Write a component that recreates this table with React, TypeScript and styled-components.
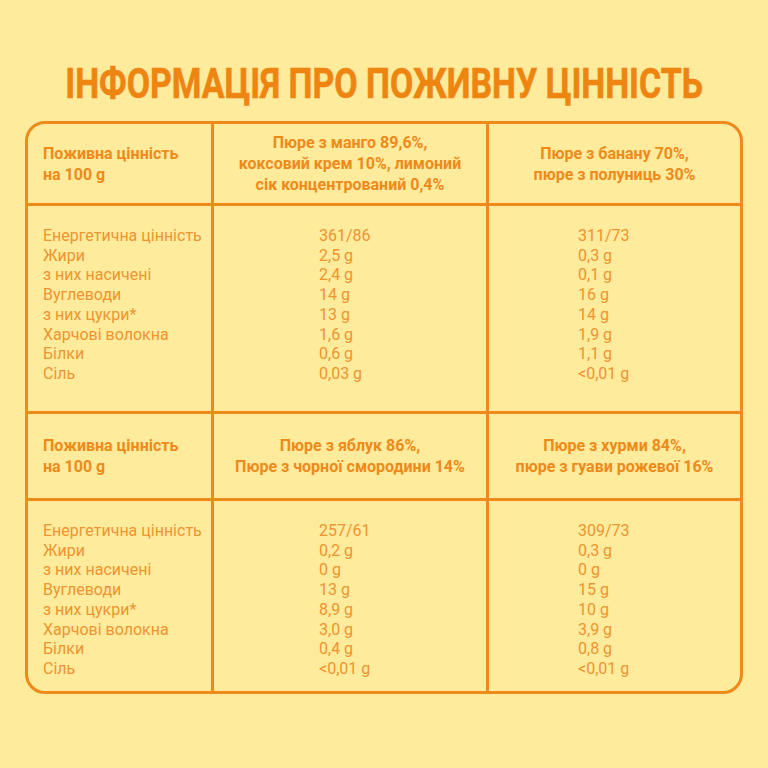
import React from "react";
import styled, { createGlobalStyle } from "styled-components";

const Global = createGlobalStyle`
  html, body { margin: 0; padding: 0; background: #FEEB9C; }
  body { font-family: Roboto, "Noto Sans", sans-serif; }
`;

const Page = styled.div`
  width: 768px;
  height: 768px;
  background: #FEEB9C;
  box-sizing: border-box;
  padding-top: 62px;
  display: flex;
  flex-direction: column;
  align-items: center;
`;

const Title = styled.h1`
  margin: 0;
  font-family: Roboto, sans-serif;
  font-weight: 700;
  font-size: 43px;
  line-height: 43px;
  color: #EE8511;
  white-space: nowrap;
  transform: scaleX(0.787);
  -webkit-text-stroke: 0.6px #EE8511;
`;

const Table = styled.div`
  margin-top: 16px;
  width: 718px;
  box-sizing: border-box;
  border: 3px solid #EE8A1A;
  border-radius: 20px;
  overflow: hidden;
  display: grid;
  grid-template-columns: 186px 275px 1fr;
  grid-template-rows: 82px 208px 87px 190px;
`;

const Cell = styled.div<{ $last?: boolean; $bottom?: boolean; $head?: boolean; $center?: boolean; $pad?: number }>`
  box-sizing: border-box;
  border-right: ${(p) => (p.$last ? "none" : "3px solid #EE8A1A")};
  border-bottom: ${(p) => (p.$bottom ? "none" : "3px solid #EE8A1A")};
  display: flex;
  flex-direction: column;
  justify-content: ${(p) => (p.$head ? "center" : "flex-start")};
  align-items: ${(p) => (p.$center ? "center" : "flex-start")};
  text-align: ${(p) => (p.$center ? "center" : "left")};
  padding-left: ${(p) => (p.$center ? 0 : p.$pad ?? 15)}px;
  padding-top: ${(p) => (p.$head ? 0 : 20)}px;
`;

const HeadText = styled.div`
  font-weight: 700;
  font-size: 16px;
  line-height: 21px;
  color: #EE8A1A;
`;

const Lines = styled.div`
  font-weight: 400;
  font-size: 16px;
  line-height: 19.7px;
  color: #EE9430;
`;

const labels = [
  "Енергетична цінність",
  "Жири",
  "з них насичені",
  "Вуглеводи",
  "з них цукри*",
  "Харчові волокна",
  "Білки",
  "Сіль",
];

type Section = {
  heads: [string[], string[]];
  values: [string[], string[]];
};

const sections: Section[] = [
  {
    heads: [
      ["Пюре з манго 89,6%,", "коксовий крем 10%, лимоний", "сік концентрований 0,4%"],
      ["Пюре з банану 70%,", "пюре з полуниць 30%"],
    ],
    values: [
      ["361/86", "2,5 g", "2,4 g", "14 g", "13 g", "1,6 g", "0,6 g", "0,03 g"],
      ["311/73", "0,3 g", "0,1 g", "16 g", "14 g", "1,9 g", "1,1 g", "<0,01 g"],
    ],
  },
  {
    heads: [
      ["Пюре з яблук 86%,", "Пюре з чорної смородини 14%"],
      ["Пюре з хурми 84%,", "пюре з гуави рожевої 16%"],
    ],
    values: [
      ["257/61", "0,2 g", "0 g", "13 g", "8,9 g", "3,0 g", "0,4 g", "<0,01 g"],
      ["309/73", "0,3 g", "0 g", "15 g", "10 g", "3,9 g", "0,8 g", "<0,01 g"],
    ],
  },
];

const Multi = ({ lines }: { lines: string[] }) => (
  <>
    {lines.map((l, i) => (
      <div key={i}>{l}</div>
    ))}
  </>
);

export default function App() {
  return (
    <Page>
      <Global />
      <Title>ІНФОРМАЦІЯ ПРО ПОЖИВНУ ЦІННІСТЬ</Title>
      <Table>
        {sections.map((s, si) => {
          const bottom = si === sections.length - 1;
          return (
            <React.Fragment key={si}>
              <Cell $head>
                <HeadText>
                  <Multi lines={["Поживна цінність", "на 100 g"]} />
                </HeadText>
              </Cell>
              <Cell $head $center>
                <HeadText>
                  <Multi lines={s.heads[0]} />
                </HeadText>
              </Cell>
              <Cell $head $center $last>
                <HeadText>
                  <Multi lines={s.heads[1]} />
                </HeadText>
              </Cell>
              <Cell $bottom={bottom}>
                <Lines>
                  <Multi lines={labels} />
                </Lines>
              </Cell>
              <Cell $bottom={bottom} $pad={105}>
                <Lines>
                  <Multi lines={s.values[0]} />
                </Lines>
              </Cell>
              <Cell $bottom={bottom} $pad={89} $last>
                <Lines>
                  <Multi lines={s.values[1]} />
                </Lines>
              </Cell>
            </React.Fragment>
          );
        })}
      </Table>
    </Page>
  );
}
